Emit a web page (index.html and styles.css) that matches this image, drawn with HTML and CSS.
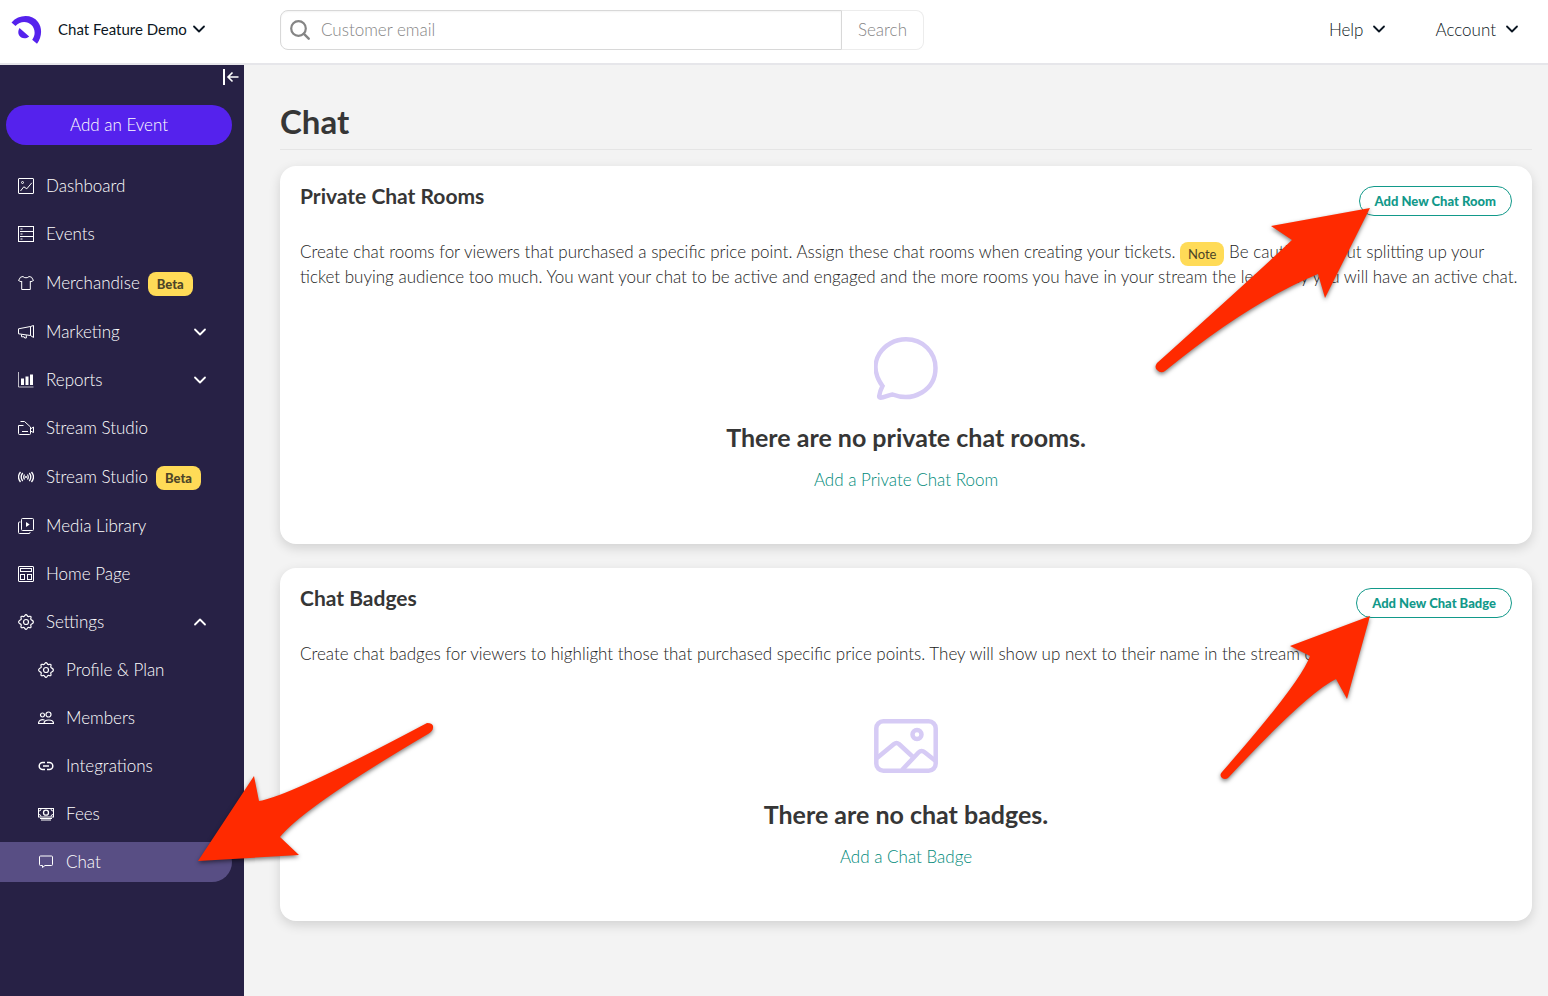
FILE: index.html
```html
<!DOCTYPE html>
<html lang="en">
<head>
<meta charset="utf-8">
<meta name="viewport" content="width=device-width, initial-scale=1">
<title>Chat</title>
<link rel="stylesheet" href="styles.css">
</head>
<body>
<svg class="sprite" aria-hidden="true">
  <symbol id="chevron" viewBox="0 0 16 16"><path d="M3 5.500l5 5 5-5" fill="none" stroke="currentColor" stroke-width="1.800" stroke-linecap="round" stroke-linejoin="round"/></symbol>
  <symbol id="gear" viewBox="0 0 16 16"><path d="M8 .6c1.100 0 1.200 1.500 2 1.900s1.900-.8 2.800 0-.4 1.900 0 2.800 2.600.9 2.600 2.700-2.200 1.900-2.600 2.700.8 2 0 2.800-1.900-.4-2.800 0-.9 1.900-2 1.900-1.200-1.500-2-1.900-1.900.8-2.800 0 .4-1.900 0-2.800S.6 9.800.6 8s2.200-1.900 2.600-2.700-.8-2 0-2.800 1.900.4 2.800 0S6.900.6 8 .6z" fill="none" stroke="currentColor" stroke-width="1.200"/><circle cx="8" cy="8" r="2.500" fill="none" stroke="currentColor" stroke-width="1.200"/></symbol>
</svg>

<header class="topbar">
  <div class="brand">
    <svg class="logo" viewBox="0 -2 32 32" aria-hidden="true"><path d="M1.500 6.500C9-2 22-2 28 6c4.500 6 4 15-1 21.700l-4.800-3.900C26 19 25 12.500 21.500 9 17 4.500 10 5 5.500 10z" fill="#5522ed"/><path d="M9.500 12l9.700 8.500c-6 5-14-1-9.700-8.500z" fill="#5522ed"/></svg>
    <button class="menu-button account-name" type="button">Chat Feature Demo <svg class="chevron"><use href="#chevron"/></svg></button>
  </div>
  <form class="search">
    <label class="search-field">
      <svg class="search-icon" viewBox="0 0 20 20" aria-hidden="true"><circle cx="8.500" cy="8.500" r="7.300" fill="none" stroke="currentColor" stroke-width="2.200"/><path d="M13.700 13.700l5 5" stroke="currentColor" stroke-width="2.400" stroke-linecap="round"/></svg>
      <input type="text" placeholder="Customer email" aria-label="Customer email">
    </label>
    <button type="button" class="search-button">Search</button>
  </form>
  <nav class="top-menu" aria-label="User">
    <button class="menu-button" type="button">Help <svg class="chevron"><use href="#chevron"/></svg></button>
    <button class="menu-button" type="button">Account <svg class="chevron"><use href="#chevron"/></svg></button>
  </nav>
</header>

<div class="layout">
  <aside class="sidebar">
    <button class="collapse" type="button" aria-label="Collapse menu"><svg viewBox="0 0 16 16"><path d="M1 0v16" stroke="currentColor" stroke-width="2"/><path d="M15.500 8H5M9.500 3.500L5 8l4.500 4.500" fill="none" stroke="currentColor" stroke-width="1.600"/></svg></button>
    <a class="add-event" href="#">Add an Event</a>
    <nav class="nav" aria-label="Main">
      <a class="item" href="#"><svg class="icon" viewBox="0 0 16 16"><rect x=".5" y=".5" width="15" height="15" rx=".5"/><circle cx="4.500" cy="4.500" r="1"/><path d="M2.500 13l3.300-4.200 3 2 5-6"/></svg><span>Dashboard</span></a>
      <a class="item" href="#"><svg class="icon" viewBox="0 0 16 16"><path d="M.5 0v16M15.500 0v16M0 .5h16M2 5.500h13M2 10.500h13M0 15.500h16M2.500 3h2M2.500 8h2M2.500 13h2"/></svg><span>Events</span></a>
      <a class="item tagged" href="#"><svg class="icon" viewBox="0 0 16 16"><path d="M5 1.500c1 1.700 5 1.700 6 0l2.500.7 2 3.300-2.700 1.300-.5-.8v8.500H3.700V6l-.5.800L.5 5.500l2-3.300z"/></svg><span>Merchandise</span><span class="badge beta">Beta</span></a>
      <button class="item" type="button"><svg class="icon" viewBox="0 0 16 16"><path d="M.5 4.800L12.500 2.500v9L.5 9.800zM12.500 2.500l3-1v12l-3-2M3.500 10.500v2.300h2.700l.5 1.200h1.600v-2.800"/></svg><span>Marketing</span><svg class="chevron"><use href="#chevron"/></svg></button>
      <button class="item" type="button"><svg class="icon" viewBox="0 0 16 16"><path d="M.5 0v15h15" opacity=".7"/><path d="M4.500 6.500V13M9 4.500V13M13.500 2.500V13" stroke-width="3"/></svg><span>Reports</span><svg class="chevron"><use href="#chevron"/></svg></button>
      <a class="item" href="#"><svg class="icon" viewBox="0 0 16 16"><path d="M12.500 7v6.500q0 1-1 1h-10q-1 0-1-1v-8h5M2.500 1.500h4l6 5.500v2l3-2v5.500l-3-1.500M4 11.500h6"/></svg><span>Stream Studio</span></a>
      <a class="item tagged" href="#"><svg class="icon" viewBox="0 0 16 16"><g stroke-width="1.300"><path d="M2.500 3q-4 5 0 10M4.700 4q-3 4 0 8M6.500 5.500q-1.500 2.500 0 5M13.500 3q4 5 0 10M11.300 4q3 4 0 8M9.500 5.500q1.500 2.500 0 5"/></g><circle cx="8" cy="8" r=".7"/></svg><span>Stream Studio</span><span class="badge beta">Beta</span></a>
      <a class="item" href="#"><svg class="icon" viewBox="0 0 16 16"><rect x="3.500" y=".5" width="12" height="12" rx="1"/><path d="M2.500 4H1.500q-1 0-1 1v9.500q0 1 1 1H11q1 0 1-1v-.5"/><path d="M8 4v5l3.700-2.500z" fill="currentColor" stroke="none"/></svg><span>Media Library</span></a>
      <a class="item" href="#"><svg class="icon" viewBox="0 0 16 16"><rect x=".5" y=".5" width="15" height="15" rx=".5"/><rect x="2.500" y="2.500" width="11" height="3"/><rect x="2.500" y="8.500" width="4" height="5"/><rect x="9.500" y="8.500" width="4" height="5"/></svg><span>Home Page</span></a>
      <button class="item" type="button" aria-expanded="true"><svg class="icon"><use href="#gear"/></svg><span>Settings</span><svg class="chevron up"><use href="#chevron"/></svg></button>
      <div class="subnav">
        <a class="item" href="#"><svg class="icon"><use href="#gear"/></svg><span>Profile &amp; Plan</span></a>
        <a class="item" href="#"><svg class="icon" viewBox="0 0 16 16"><g stroke-width="1.200"><circle cx="4.500" cy="5" r="2"/><circle cx="10.500" cy="4.500" r="2.500"/><path d="M6 13.500c0-4.700 9.500-4.700 9.500 0zM5.500 13.500h-5c0-3 2.700-4.500 6-3.500"/></g></svg><span>Members</span></a>
        <a class="item" href="#"><svg class="icon" viewBox="0 0 16 16"><path d="M7 4.500H4.700a3.300 3.300 0 000 7H7M9 4.500h2.300a3.300 3.300 0 010 7H9M5 8h6" stroke-width="1.500"/></svg><span>Integrations</span></a>
        <a class="item" href="#"><svg class="icon" viewBox="0 0 16 16"><rect x=".5" y="2.500" width="15" height="8.500"/><circle cx="8" cy="6.700" r="2.500" stroke-width="1.300"/><path d="M1 5q2 0 2-2M15 5q-2 0-2-2M1 8.500q2 0 2 2M15 8.500q-2 0-2 2M2 12.500h12M3 14h10"/></svg><span>Fees</span></a>
        <a class="item current" href="#" aria-current="page"><svg class="icon" viewBox="0 0 16 16"><path d="M2.500 2h11q1 0 1 1v7.500q0 1-1 1H7l-2.500 2v-2h-2q-1 0-1-1V3q0-1 1-1z"/></svg><span>Chat</span>
          <svg class="arrow arrow-nav" viewBox="0 0 255 155" aria-hidden="true"><path d="M8 146L64 61l5 25Q98 82 237 8q7 0 6 5 0 3-5 6Q114 92 90 122l19 18z"/></svg>
        </a>
      </div>
    </nav>
  </aside>

  <main class="content">
    <h1>Chat</h1>
    <section class="card">
      <div class="card-head"><h2>Private Chat Rooms</h2><button class="outline" type="button">Add New Chat Room</button></div>
      <p class="intro">Create chat rooms for viewers that purchased a specific price point. Assign these chat rooms when creating your tickets. <span class="badge">Note</span> Be cautious about splitting up your ticket buying audience too much. You want your chat to be active and engaged and the more rooms you have in your stream the less likely you will have an active chat.</p>
      <div class="empty">
        <svg class="empty-icon" viewBox="0 0 64 64" aria-hidden="true"><path d="M8.500 49C-9 25 10 2.300 32 2.300c17 0 29.500 13 29.500 28.700 0 22-22 34.500-43 26.500-5 1-8 3-12 3.300-1 0-1.500-.8-1.300-1.800.5-3.500 2-7.500 3.300-10z"/></svg>
        <h3>There are no private chat rooms.</h3>
        <a href="#">Add a Private Chat Room</a>
      </div>
      <svg class="arrow arrow-room" viewBox="0 0 230 185" aria-hidden="true"><path d="M220 8L121 26l21 14Q106 74 7 163q-3 4 0 7 4 4 8 1Q98 103 168 74l7 24z"/></svg>
    </section>
    <section class="card">
      <div class="card-head"><h2>Chat Badges</h2><button class="outline" type="button">Add New Chat Badge</button></div>
      <p class="intro">Create chat badges for viewers to highlight those that purchased specific price points. They will show up next to their name in the stream chat.</p>
      <div class="empty">
        <svg class="empty-icon" viewBox="0 0 64 64" aria-hidden="true"><rect x="2.300" y="7.300" width="59.400" height="49.400" rx="7"/><circle cx="43" cy="20.500" r="4.500"/><path d="M3 44l17-14q2.500-2 5 0l14.500 13.500M28 56l16.500-17.500q3-3 6.500 0l10 8"/></svg>
        <h3>There are no chat badges.</h3>
        <a href="#">Add a Chat Badge</a>
      </div>
      <svg class="arrow arrow-badge" viewBox="0 0 165 180" aria-hidden="true"><path d="M155 6L75 36l20 10Q86 72 7 162q-3 3 0 6 3 2 6 0Q92 83 121 69l11 20z"/></svg>
    </section>
  </main>
</div>
</body>
</html>
```

FILE: styles.css
```css
* { box-sizing: border-box; }

body {
  margin: 0;
  min-height: 100vh;
  display: flex;
  flex-direction: column;
  background: #f3f3f3;
  color: #222;
  font: 300 17px/25px Lato, "Open Sans", sans-serif;
}

h1, h2, h3, p { margin: 0; }
a { color: inherit; text-decoration: none; }
button, input { font: inherit; color: inherit; }
button { background: none; border: 0; padding: 0; cursor: pointer; }
.sprite { position: absolute; width: 0; height: 0; }
.chevron { width: 16px; height: 16px; flex: none; }
.up { transform: rotate(180deg); }

/* Top bar */
.topbar {
  display: flex;
  align-items: center;
  height: 65px;
  padding: 0 28px 3px 10px;
  background: #fff;
  border-bottom: 2px solid #e6e6ea;
  color: #0b1622;
}
.brand { display: flex; align-items: center; gap: 16px; width: 270px; flex: none; }
.logo { width: 32px; height: 32px; }
.menu-button { display: flex; align-items: center; gap: 8px; padding-bottom: 2px; }
.account-name { gap: 4px; font-size: 15px; font-weight: 400; }
.search { display: flex; flex: 0 1 644px; height: 40px; color: #858585; }
.search-field {
  display: flex;
  align-items: center;
  flex: 1;
  gap: 11px;
  padding-left: 9px;
  border: 1px solid #d8d8d8;
  border-radius: 8px 0 0 8px;
  box-shadow: inset 0 1px 2px #0000000d;
}
.search-icon { width: 20px; height: 20px; }
.search input { flex: 1; min-width: 0; border: 0; outline: 0; padding: 0 0 2px; background: none; }
.search input::placeholder { color: #858585; opacity: 1; }
.search-button { width: 82px; padding-bottom: 2px; border: 1px solid #ececec; border-left: 0; border-radius: 0 8px 8px 0; }
.top-menu { display: flex; gap: 48px; margin-left: auto; }

/* Sidebar */
.layout { display: flex; flex: 1; }
.sidebar {
  display: flex;
  flex-direction: column;
  flex: none;
  width: 244px;
  padding: 4px 12px 16px 0;
  background: #272145;
  color: #fff;
}
.collapse { align-self: flex-end; width: 16px; height: 16px; margin: 0 -7px 20px 0; }
.collapse svg { display: block; width: 16px; height: 16px; }
.add-event {
  margin: 0 0 21px 6px;
  line-height: 40px;
  text-align: center;
  border-radius: 20px;
  background: #5522ed;
}
.nav, .subnav { display: flex; flex-direction: column; gap: 8px; }
.item {
  display: flex;
  align-items: center;
  gap: 12px;
  min-height: 40px;
  padding: 0 24px 0 18px;
  text-align: left;
}
.item span { padding-bottom: 2px; }
.item .chevron { margin-left: auto; color: #fff; }
.tagged { min-height: 42px; }
.icon { width: 16px; height: 16px; flex: none; fill: none; stroke: currentColor; }
.subnav .item { position: relative; padding-left: 38px; }
.current { background: #584e84; border-radius: 0 20px 20px 0; }
.badge {
  display: inline-block;
  padding: 0 8px;
  border-radius: 8px;
  background: #ffdb57;
  color: #4d4528;
  font-size: 13px;
  font-weight: 400;
  line-height: 24px;
}
.item .beta { margin: 2px 0 0 -4px; padding: 0 9px; font-weight: 900; }

/* Content */
.content { flex: 1; min-width: 0; padding: 36px 16px 24px 36px; }
h1, h2, h3 { color: #363636; font-weight: 700; }
h1 {
  padding-bottom: 8px;
  margin-bottom: 16px;
  border-bottom: 1px solid #e5e5e5;
  font-size: 33px;
  line-height: 40px;
}
.card {
  position: relative;
  margin-bottom: 24px;
  padding: 20px 20px 52px;
  border-radius: 16px;
  background: #fff;
  box-shadow: 0 4px 12px #00000024;
}
.card-head { display: flex; align-items: flex-start; justify-content: space-between; margin-bottom: 23px; }
h2 { font-size: 21px; line-height: 20px; }
.outline {
  height: 30px;
  padding: 0 15px;
  border: 1px solid #12998a;
  border-radius: 15px;
  color: #12998a;
  font-size: 13px;
  font-weight: 900;
}
.intro { margin-right: -8px; }
.intro .badge { margin: -4px 0; vertical-align: middle; }
.empty { display: flex; flex-direction: column; align-items: center; margin-top: 48px; }
.empty-icon { width: 64px; height: 64px; fill: none; stroke: #d6cbf5; stroke-width: 4.500; }
h3 { margin: 20px 0 14px; font-size: 25px; line-height: 32px; }
.empty a { color: #008a7a; }

/* Callout arrows laid over the page */
.arrow {
  position: absolute;
  z-index: 2;
  overflow: visible;
  pointer-events: none;
  fill: #ff2a00;
  filter: drop-shadow(0 2px 2px #00000080);
}
.arrow-nav { left: 190px; top: -127px; width: 255px; height: 155px; }
.arrow-room { right: 152px; top: 34px; width: 230px; height: 185px; }
.arrow-badge { right: 152px; top: 42px; width: 165px; height: 180px; }
```
